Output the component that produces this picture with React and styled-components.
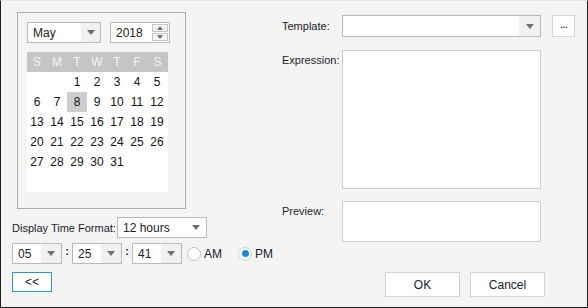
import React from 'react';
import styled, { createGlobalStyle } from 'styled-components';

const GlobalStyle = createGlobalStyle`
  html, body {
    margin: 0;
    padding: 0;
    background: #ffffff;
  }
  body {
    font-family: "Liberation Sans", Arial, sans-serif;
    font-size: 11px;
    color: #1b1b2b;
  }
`;

const Dialog = styled.div`
  width: 588px;
  height: 308px;
  box-sizing: border-box;
  background: #f4f5f3;
  border: 1px solid #1e1e1e;
  border-top-color: #e6e6e6;
  padding: 0 11px;
  display: flex;
  flex-direction: column;
`;

const Body = styled.div`
  display: flex;
  height: 271px;
`;

const LeftColumn = styled.div`
  width: 270px;
  flex-shrink: 0;
  display: flex;
  flex-direction: column;
`;

const RightColumn = styled.div`
  display: flex;
  flex-direction: column;
`;

const CalendarBox = styled.div`
  margin: 11px 0 0 5px;
  width: 169px;
  height: 197px;
  box-sizing: border-box;
  border: 1px solid #a9a9a9;
  padding: 9px 16px 16px 9px;
`;

const CalendarTop = styled.div`
  display: flex;
  gap: 9px;
`;

const SelectBox = styled.div`
  width: ${p => p.w}px;
  height: ${p => p.h || 21}px;
  box-sizing: border-box;
  border: 1px solid #b9b9b9;
  background: #ffffff;
  display: flex;
  align-items: stretch;
  flex-shrink: 0;
`;

const SelectText = styled.div`
  flex: 1;
  display: flex;
  align-items: center;
  padding-left: 5px;
  font-size: 12px;
  color: #222;
  white-space: nowrap;
`;

const ArrowArea = styled.div`
  width: ${p => p.w || 19}px;
  background: ${p => (p.plain ? '#ffffff' : '#f1f1f1')};
  display: flex;
  align-items: center;
  justify-content: center;
`;

const Triangle = styled.span`
  width: 0;
  height: 0;
  border-left: 4px solid transparent;
  border-right: 4px solid transparent;
  border-top: 5px solid #6f6f6f;
  ${p => p.up && 'border-top: none; border-bottom: 4px solid #6f6f6f; border-left-width: 3px; border-right-width: 3px;'}
  ${p => p.down && 'border-top-width: 4px; border-left-width: 3px; border-right-width: 3px;'}
`;

const Spinner = styled.div`
  width: 16px;
  display: flex;
  flex-direction: column;
  gap: 1px;
  padding: 1px 1px 1px 0;
`;

const SpinButton = styled.div`
  flex: 1;
  border: 1px solid #c4c4c4;
  background: #f7f7f7;
  display: flex;
  align-items: center;
  justify-content: center;
`;

const DayGrid = styled.div`
  margin-top: 9px;
  width: 141px;
  height: 140px;
  background: #ffffff;
  display: grid;
  grid-template-columns: repeat(7, 20px);
  grid-auto-rows: 20px;
  align-content: start;
  font-size: 12px;
`;

const DayHead = styled.div`
  background: #c5c4c6;
  color: #f4f4f4;
  display: flex;
  align-items: center;
  justify-content: center;
  ${p => p.last && 'width: 21px;'}
`;

const DayCell = styled.div`
  display: flex;
  align-items: center;
  justify-content: center;
  color: #111;
  background: ${p => (p.selected ? '#cccccc' : 'transparent')};
`;

const FormatRow = styled.div`
  margin-top: 8px;
  display: flex;
  align-items: center;
`;

const Label = styled.div`
  width: ${p => p.w}px;
  flex-shrink: 0;
  font-size: 11px;
  color: #1b1b2b;
  white-space: nowrap;
  ${p => p.top && 'align-self: flex-start; padding-top: 4px;'}
`;

const TimeRow = styled.div`
  margin-top: 5px;
  display: flex;
  align-items: center;
`;

const Colon = styled.div`
  width: 10px;
  flex-shrink: 0;
  text-align: center;
  font-weight: bold;
  margin-top: -5px;
`;

const RadioLabel = styled.label`
  display: flex;
  align-items: center;
  margin-left: ${p => p.ml}px;
  font-size: 12px;
  color: #1b1b2b;
`;

const RadioCircle = styled.span`
  width: 14px;
  height: 14px;
  box-sizing: border-box;
  border-radius: 50%;
  border: 1px solid ${p => (p.checked ? '#b8d6ee' : '#c4c4c4')};
  background: #ffffff;
  display: flex;
  align-items: center;
  justify-content: center;
  margin-right: 3px;
  &::after {
    content: '';
    width: 7px;
    height: 7px;
    border-radius: 50%;
    background: ${p => (p.checked ? '#1a8ad8' : 'transparent')};
  }
`;

const FieldRow = styled.div`
  display: flex;
  align-items: center;
  margin-top: ${p => p.mt}px;
`;

const TextBox = styled.div`
  width: 199px;
  height: ${p => p.h}px;
  box-sizing: border-box;
  border: 1px solid #cfcfcf;
  background: #ffffff;
`;

const SmallButton = styled.button`
  margin-left: 11px;
  width: 23px;
  height: 22px;
  box-sizing: border-box;
  border: 1px solid #d3d3d3;
  background: #ffffff;
  font-family: inherit;
  font-size: 12px;
  color: #222;
  padding: 0 0 4px;
  letter-spacing: -1px;
`;

const Footer = styled.div`
  display: flex;
  align-items: flex-start;
`;

const Button = styled.button`
  width: ${p => p.w}px;
  height: ${p => p.h}px;
  box-sizing: border-box;
  margin-left: ${p => p.ml || 0}px;
  border: 1px solid ${p => (p.primary ? '#2a93dc' : '#d3d3d3')};
  background: #ffffff;
  font-family: inherit;
  font-size: 12px;
  color: #1b1b2b;
  padding: 0;
`;

const Select = ({ w, h, value, arrowW, plain }) => (
  <SelectBox w={w} h={h}>
    <SelectText>{value}</SelectText>
    <ArrowArea w={arrowW} plain={plain}>
      <Triangle />
    </ArrowArea>
  </SelectBox>
);

const weekDays = ['S', 'M', 'T', 'W', 'T', 'F', 'S'];
const days = [null, null, ...Array.from({ length: 31 }, (_, i) => i + 1)];

const App = () => (
  <>
    <GlobalStyle />
    <Dialog>
      <Body>
        <LeftColumn>
          <CalendarBox>
            <CalendarTop>
              <Select w={74} value="May" />
              <SelectBox w={60}>
                <SelectText>2018</SelectText>
                <Spinner>
                  <SpinButton><Triangle up /></SpinButton>
                  <SpinButton><Triangle down /></SpinButton>
                </Spinner>
              </SelectBox>
            </CalendarTop>
            <DayGrid>
              {weekDays.map((d, i) => (
                <DayHead key={i} last={i === 6}>{d}</DayHead>
              ))}
              {days.map((d, i) => (
                <DayCell key={i} selected={d === 8}>{d}</DayCell>
              ))}
            </DayGrid>
          </CalendarBox>

          <FormatRow>
            <Label w={105}>Display Time Format:</Label>
            <Select w={90} value="12 hours" arrowW={20} plain />
          </FormatRow>

          <TimeRow>
            <Select w={50} value="05" arrowW={20} />
            <Colon>:</Colon>
            <Select w={50} value="25" arrowW={20} />
            <Colon>:</Colon>
            <Select w={50} value="41" arrowW={20} />
            <RadioLabel ml={5}>
              <RadioCircle />
              AM
            </RadioLabel>
            <RadioLabel ml={16}>
              <RadioCircle checked />
              PM
            </RadioLabel>
          </TimeRow>
        </LeftColumn>

        <RightColumn>
          <FieldRow mt={14}>
            <Label w={60}>Template:</Label>
            <Select w={199} h={22} value="" arrowW={21} />
            <SmallButton>...</SmallButton>
          </FieldRow>
          <FieldRow mt={13}>
            <Label w={60} top>Expression:</Label>
            <TextBox h={139} />
          </FieldRow>
          <FieldRow mt={12}>
            <Label w={60} top>Preview:</Label>
            <TextBox h={41} />
          </FieldRow>
        </RightColumn>
      </Body>

      <Footer>
        <Button primary w={40} h={20}>&lt;&lt;</Button>
        <Button w={75} h={25} ml={333}>OK</Button>
        <Button w={75} h={25} ml={10}>Cancel</Button>
      </Footer>
    </Dialog>
  </>
);

export default App;
